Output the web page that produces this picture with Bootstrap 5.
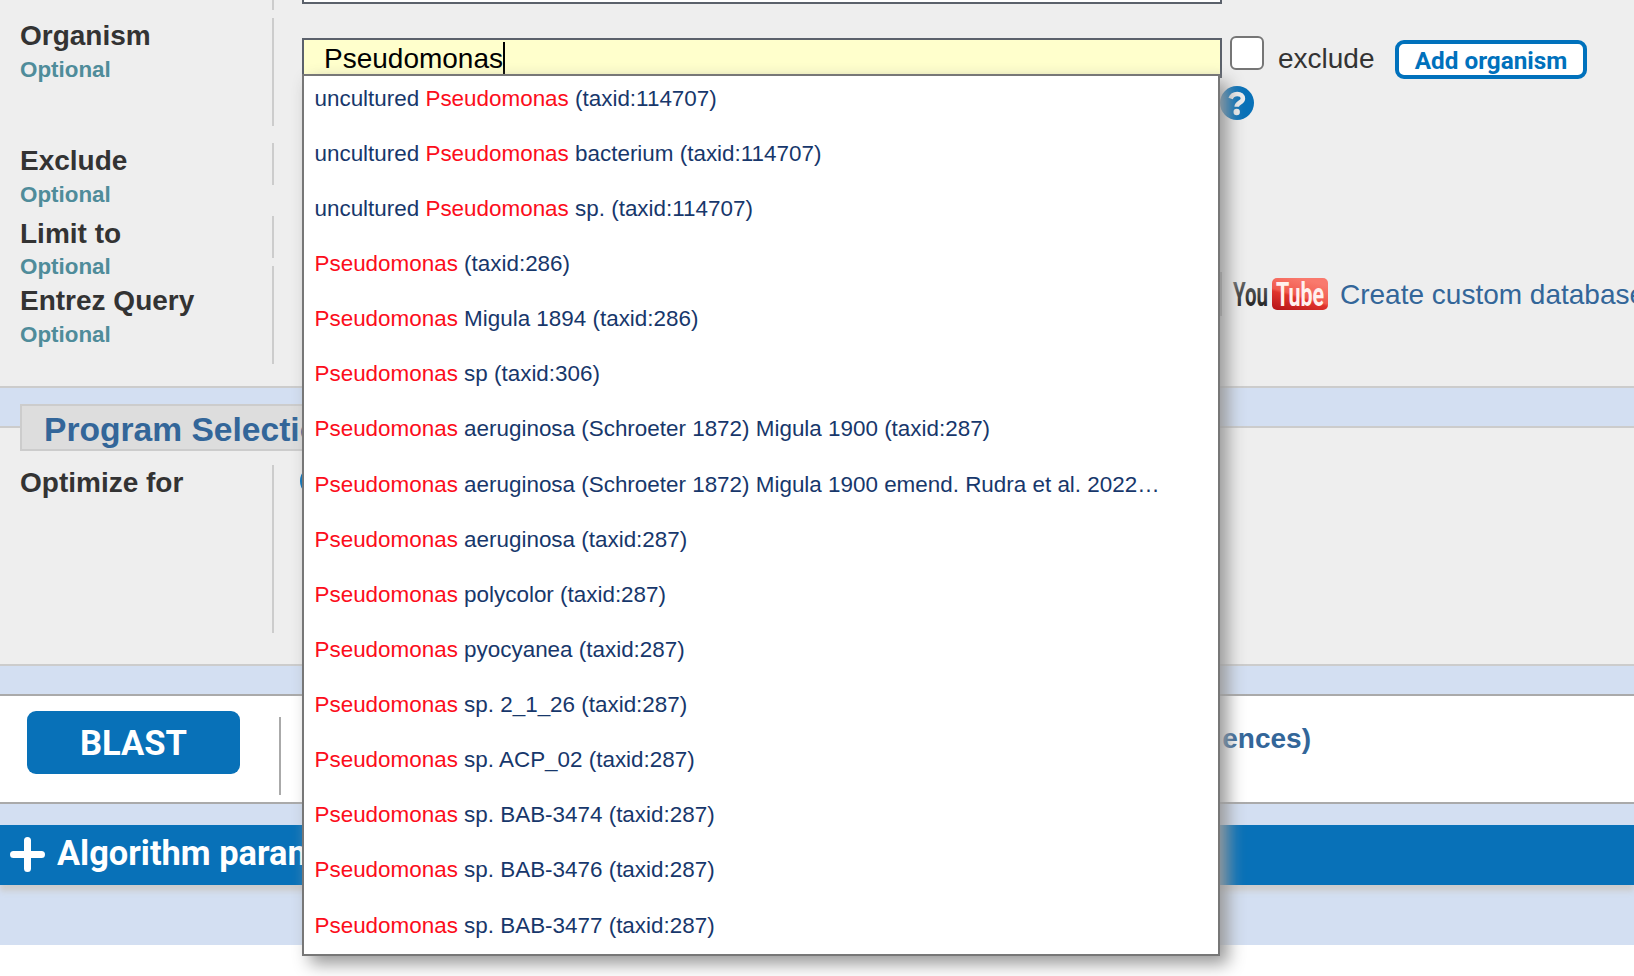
<!DOCTYPE html>
<html lang="en">
<head>
<meta charset="utf-8">
<title>BLAST search</title>
<link href="https://cdn.jsdelivr.net/npm/bootstrap@5.3.0/dist/css/bootstrap.min.css" rel="stylesheet">
<script src="https://cdn.jsdelivr.net/npm/bootstrap@5.3.0/dist/js/bootstrap.bundle.min.js"></script>
<style>
body{font-family:"Liberation Sans",Arial,sans-serif;font-size:28px;line-height:32px;color:#333;background:#fff;height:976px;overflow:hidden}
.page-bg{background:#d3dff2;height:945px}
.form-sec{background:#eee;border-bottom:2px solid #ccc}
.sec-db{height:388px}
.sec-prog{height:240px;margin-top:38px;border-top:2px solid #ccc;padding-left:20px}
.lab{width:274px;border-right:2px solid #ccc;padding:2px 0 0 20px;flex:none;font-weight:700;white-space:nowrap}
.lab small{display:block;font-size:22.4px;line-height:32px;color:#4f8c9a;margin-top:2px}
.fld{margin-left:28px;white-space:nowrap}
.box-prev{width:920px;height:4px;background:#fff;border:2px solid #5b616b;border-top:0}
.org-in{position:relative;width:920px;height:40px;margin-top:20px;background:#ffffcc;border:2px solid #5b616b;color:#000;padding:3px 0 0 20px;line-height:32px}
.caret{display:inline-block;width:2px;height:32px;background:#000;vertical-align:top;margin-top:-1px}
.menu{position:absolute;z-index:5;left:-2px;top:34px;width:918px;height:882px;background:#fff;border:2px solid #777;box-shadow:8px 8px 16px #999;margin:0;padding:0 0 0 10.5px;list-style:none;font-size:22.43px;color:#17376b}
.menu li{height:55.13px;line-height:46px}
.menu li:first-child{margin-top:-.35px}
.menu b{font-weight:400;color:#fc0d1b}
.chk{width:34px;height:34px;margin:18px 0 0 8px;border:2px solid #767676;border-radius:6px;background:#fff;flex:none}
.excl{margin:25px 0 0 14px;width:117px}
.add-btn{font:700 24.3px/32px Roboto,sans-serif;color:#0071bc;background:#fff;border:4px solid #0071bc;border-radius:9px;width:192px;height:39px;padding:1px 0 0;margin-top:22px;text-align:center}
.legend-tab{width:400px;height:47px;margin-top:-24px;background:#ddd;border:2px solid #ccc;padding:5px 0 0 22px;color:#369;font-weight:700;font-size:33.6px;line-height:38px}
.radio-o{width:32px;height:32px;border:4px solid #0071bc;border-radius:50%;background:#fff}
.run-sec{height:110px;margin-top:28px;background:#fff;border:solid #aaa;border-width:2px 0}
.blast-btn{width:213px;height:63px;margin:15px 39px 0 27px;border:0;border-radius:9px;background:#0871b8;color:#fff;font:700 34.6px/63px Roboto,sans-serif;padding:1px 0 0;flex:none}
.run-line{width:2px;height:78px;background:#aaa;margin-top:21px}
.db-name{width:1030px;text-align:right;margin-top:27px;font-weight:700;color:#369}
.algo{height:60px;margin-top:21px;background:#0871b8;color:#fff;font:700 34.4px/57px Roboto,sans-serif;box-shadow:0 6px 6px #ccc;padding-left:10px}
</style>
</head>
<body>
<div class="page-bg">
  <section class="form-sec sec-db">
    <div class="d-flex" style="height:18px">
      <div class="lab" style="height:10px"></div>
      <div class="fld"><div class="box-prev"></div></div>
    </div>
    <div class="d-flex" style="height:125px">
      <div class="lab" style="height:108px">Organism<small>Optional</small></div>
      <div class="fld">
        <div class="d-flex">
          <div class="org-in">Pseudomonas<span class="caret"></span>
            <ul class="menu">
              <li>uncultured <b>Pseudomonas</b> (taxid:114707)</li>
              <li>uncultured <b>Pseudomonas</b> bacterium (taxid:114707)</li>
              <li>uncultured <b>Pseudomonas</b> sp. (taxid:114707)</li>
              <li><b>Pseudomonas</b> (taxid:286)</li>
              <li><b>Pseudomonas</b> Migula 1894 (taxid:286)</li>
              <li><b>Pseudomonas</b> sp (taxid:306)</li>
              <li><b>Pseudomonas</b> aeruginosa (Schroeter 1872) Migula 1900 (taxid:287)</li>
              <li><b>Pseudomonas</b> aeruginosa (Schroeter 1872) Migula 1900 emend. Rudra et al. 2022…</li>
              <li><b>Pseudomonas</b> aeruginosa (taxid:287)</li>
              <li><b>Pseudomonas</b> polycolor (taxid:287)</li>
              <li><b>Pseudomonas</b> pyocyanea (taxid:287)</li>
              <li><b>Pseudomonas</b> sp. 2_1_26 (taxid:287)</li>
              <li><b>Pseudomonas</b> sp. ACP_02 (taxid:287)</li>
              <li><b>Pseudomonas</b> sp. BAB-3474 (taxid:287)</li>
              <li><b>Pseudomonas</b> sp. BAB-3476 (taxid:287)</li>
              <li><b>Pseudomonas</b> sp. BAB-3477 (taxid:287)</li>
            </ul>
          </div>
          <span class="chk"></span>
          <span class="excl">exclude</span>
          <button class="add-btn">Add organism</button>
        </div>
        <svg class="d-block" width="34" height="34" viewBox="0 0 34 34" style="margin:7px 0 0 918px"><circle cx="17" cy="17" r="17" fill="#0871b8"/><path d="M10.600 12.500C11.800 9.200 14 8 17.200 8C20.700 8 22.900 10 22.900 12.700C22.900 16.600 16.700 16.400 16.700 20.700" fill="none" stroke="#eee" stroke-width="4.600"/><circle cx="16.700" cy="26" r="3.200" fill="#eee"/></svg>
      </div>
    </div>
    <div class="d-flex" style="height:73px"><div class="lab" style="height:42px">Exclude<small>Optional</small></div></div>
    <div class="d-flex" style="height:50px"><div class="lab" style="height:42px">Limit to<small style="margin-top:1px">Optional</small></div></div>
    <div class="d-flex">
      <div class="lab" style="height:98px;padding-top:19px">Entrez Query<small>Optional</small></div>
      <div class="fld d-flex align-items-start">
        <div style="width:920px;height:44px;border:2px solid #999;margin-top:6px"></div>
        <svg width="98" height="34" viewBox="0 0 98 34" style="margin:11px 0 0 10px">
          <defs><linearGradient id="yt" x1="0" y1="1" x2=".5" y2="0"><stop offset="0" stop-color="#b31217"/><stop offset=".48" stop-color="#e0342c"/><stop offset=".55" stop-color="#f0594d"/><stop offset="1" stop-color="#f9796d"/></linearGradient>
          <linearGradient id="yk" x1="0" y1="0" x2="0" y2="1"><stop offset="0" stop-color="#777"/><stop offset="1" stop-color="#111"/></linearGradient></defs>
          <rect x="40" y="1" width="56" height="32" rx="5" fill="url(#yt)"/>
          <g font-family="Roboto,sans-serif" font-size="34" font-weight="700"><text x="1" y="29" textLength="35" lengthAdjust="spacingAndGlyphs" fill="url(#yk)">You</text>
          <text x="44" y="29" textLength="48" lengthAdjust="spacingAndGlyphs" fill="#fff0ee">Tube</text></g>
        </svg>
        <span style="margin:13px 0 0 10px;color:#369">Create custom database</span>
      </div>
    </div>
  </section>

  <section class="form-sec sec-prog">
    <div class="legend-tab">Program Selection</div>
    <div class="d-flex" style="margin:14px 0 0 -20px">
      <div class="lab" style="height:168px">Optimize for</div>
      <div style="margin-left:26px"><div class="radio-o"></div></div>
    </div>
  </section>

  <section class="run-sec d-flex">
    <button class="blast-btn">BLAST</button>
    <div class="run-line"></div>
    <div class="db-name">ences)</div>
  </section>

  <div class="algo d-flex">
    <svg width="35" height="35" viewBox="0 0 35 35" style="margin:12px 12px 0 0"><path d="M17.500 3.500V31.500M3.500 17.500H31.500" stroke="#fff" stroke-width="7" stroke-linecap="round"/></svg>
    <span>Algorithm parameters</span>
  </div>
</div>
</body>
</html>
